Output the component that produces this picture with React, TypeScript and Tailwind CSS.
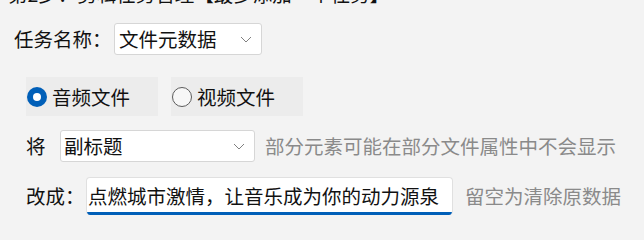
import { useState } from "react";

const font = {
  fontFamily: '"Noto Sans CJK SC", "Noto Sans", sans-serif',
};

function Chevron() {
  return (
    <svg width="12" height="7" viewBox="0 0 12 7" className="shrink-0">
      <path d="M1 1l5 5 5-5" fill="none" stroke="#808080" strokeWidth="1" />
    </svg>
  );
}

function Select({ value, className = "" }: { value: string; className?: string }) {
  return (
    <div
      className={`flex h-[32px] items-center justify-between rounded-[3px] border border-[#d6d6d6] bg-white pr-[9px] ${className}`}
    >
      <span className="leading-none">{value}</span>
      <Chevron />
    </div>
  );
}

function Radio({ label, checked, onClick }: { label: string; checked: boolean; onClick: () => void }) {
  return (
    <button
      onClick={onClick}
      className="flex h-[39px] w-[132px] items-center gap-[5px] bg-[#ececec] pl-[1px] text-left"
    >
      {checked ? (
        <span className="flex h-[20px] w-[20px] items-center justify-center rounded-full bg-[#005fb8]">
          <span className="h-[8px] w-[8px] rounded-full bg-white" />
        </span>
      ) : (
        <span className="h-[20px] w-[20px] rounded-full border border-[#5c5c5c] bg-[#f7f7f7]" />
      )}
      <span className="leading-none">{label}</span>
    </button>
  );
}

export default function App() {
  const [kind, setKind] = useState<"audio" | "video">("audio");

  return (
    <div
      className="h-[240px] w-[644px] overflow-hidden bg-[#f3f3f3] text-[19.5px] text-[#111111]"
      style={font}
    >
      {/* Heading, scrolled partly out of view */}
      <div className="-mt-[19px] h-[26px] whitespace-nowrap pl-[8px] leading-[26px]">
        第2步：剪辑任务管理【最多添加一个任务】
      </div>

      {/* Task name */}
      <div className="mt-[16px] flex items-center pl-[14px]">
        <span className="w-[100px] leading-none">任务名称：</span>
        <Select value="文件元数据" className="w-[148px] pl-[4px]" />
      </div>

      {/* File type */}
      <div className="ml-[26px] mt-[22px] flex gap-[13px]">
        <Radio label="音频文件" checked={kind === "audio"} onClick={() => setKind("audio")} />
        <Radio label="视频文件" checked={kind === "video"} onClick={() => setKind("video")} />
      </div>

      {/* Field */}
      <div className="ml-[26px] mt-[14px] flex items-center">
        <span className="w-[34px] leading-none">将</span>
        <Select value="副标题" className="w-[195px] pl-[3px]" />
        <span className="ml-[10px] whitespace-nowrap leading-none text-[#8a8a8a]">
          部分元素可能在部分文件属性中不会显示
        </span>
      </div>

      {/* New value */}
      <div className="ml-[26px] mt-[15px] flex items-center">
        <span className="w-[60px] leading-none">改成：</span>
        <div className="flex h-[38px] w-[367px] items-center overflow-hidden rounded-[4px] border border-b-0 border-[#e0e0e0] bg-white">
          <div className="flex h-full w-full items-center border-b-[3px] border-[#005fb8] pl-[1px] pt-[2px]">
            <span className="whitespace-nowrap leading-none">点燃城市激情，让音乐成为你的动力源泉</span>
          </div>
        </div>
        <span className="ml-[12px] whitespace-nowrap leading-none text-[#8a8a8a]">留空为清除原数据</span>
      </div>
    </div>
  );
}
